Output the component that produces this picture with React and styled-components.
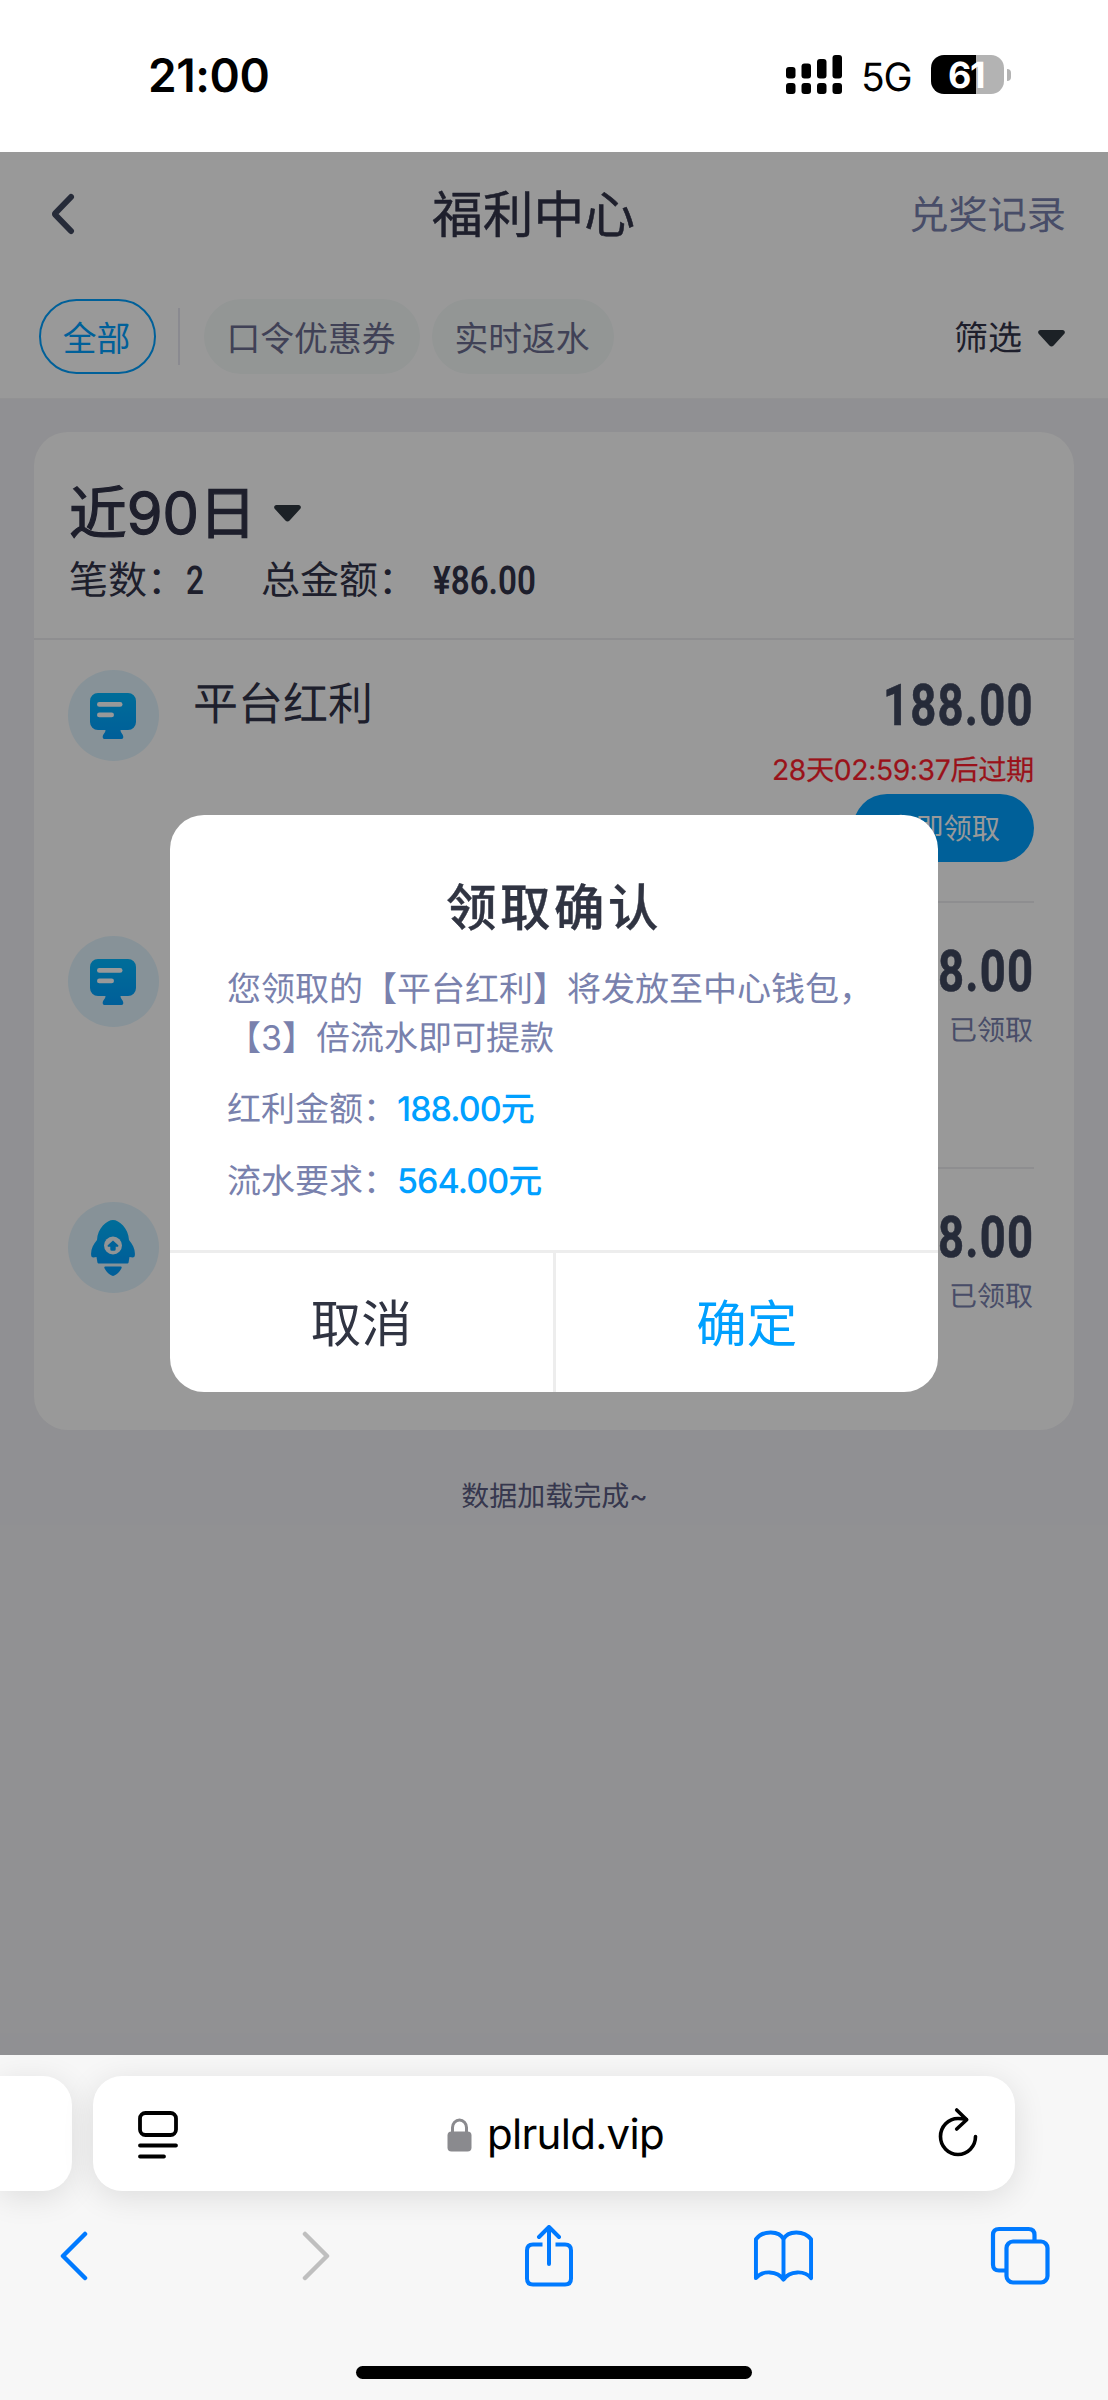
import React from "react";
import styled, { createGlobalStyle } from "styled-components";

const GlobalStyle = createGlobalStyle`
  * { box-sizing: border-box; }
  body {
    margin: 0;
    background: #fff;
    font-family: Inter, "Noto Sans CJK SC", sans-serif;
    text-rendering: geometricPrecision;
  }
`;

const Phone = styled.div`
  width: 1108px;
  height: 2400px;
  display: flex;
  flex-direction: column;
  overflow: hidden;
`;

/* ---------- status bar ---------- */

const StatusBar = styled.header`
  height: 152px;
  padding: 0 97px 3px 148px;
  display: flex;
  align-items: center;
  justify-content: space-between;
  background: #fff;
`;

const Clock = styled.time`
  padding-top: 2px;
  font-size: 46px;
  font-weight: 600;
  line-height: 60px;
  letter-spacing: -0.4px;
  color: #000;
`;

const StatusIcons = styled.div`
  display: flex;
  align-items: center;
`;

const Network = styled.span`
  margin: 6px 21px 0 18px;
  width: 49px;
  font-size: 39px;
  line-height: 46px;
  letter-spacing: -1.2px;
  white-space: nowrap;
`;

const Battery = styled.div`
  width: 73px;
  height: 39px;
  padding-right: 3px;
  border-radius: 13px;
  background: linear-gradient(to right, #000 0 45px, #b3b3b3 45px);
  color: #fff;
  font-size: 36px;
  font-weight: 700;
  line-height: 40px;
  text-align: center;
  letter-spacing: -1.5px;
`;

const BatteryCap = styled.div`
  width: 4px;
  height: 12px;
  margin-left: 3px;
  border-radius: 0 5px 5px 0;
  background: #b3b3b3;
`;

/* ---------- page ---------- */

const Viewport = styled.main`
  position: relative;
  height: 1903px;
  background: #f1f1f5;
`;

const TopPanel = styled.div`
  height: 247px;
  background: #fff;
  border-bottom: 1px solid #f4f4f6;
`;

const TitleBar = styled.div`
  height: 124px;
  padding: 0 42px 0 50px;
  display: grid;
  grid-template-columns: 1fr auto 1fr;
  align-items: center;
`;

const PageTitle = styled.h1`
  margin: 4px 49px 0 0;
  font-size: 50.7px;
  font-weight: 400;
  line-height: 60px;
  color: #32344a;
  -webkit-text-stroke: 0.5px #32344a;
`;

const HistoryLink = styled.a`
  justify-self: end;
  margin-top: 3px;
  font-size: 39.2px;
  line-height: 50px;
  color: #7981ad;
`;

const FilterBar = styled.div`
  height: 122px;
  padding: 23px 43px 24px 39px;
  display: flex;
  align-items: center;
`;

const Pill = styled.button`
  height: 75px;
  width: ${(p) => p.$width}px;
  margin-right: 12px;
  padding: 4px 2px 0 0;
  border: ${(p) => (p.$active ? "2px solid #00a0ff" : "0")};
  border-radius: 38px;
  background: ${(p) => (p.$active ? "transparent" : "#f5faf9")};
  color: ${(p) => (p.$active ? "#00a0ff" : "#6b6d90")};
  font: 400 33.8px/48px Inter, "Noto Sans CJK SC", sans-serif;
`;

const PillDivider = styled.span`
  width: 2px;
  height: 57px;
  margin: 0 24px 0 10px;
  background: #e6e6f0;
`;

const FilterToggle = styled.div`
  margin-left: auto;
  padding-top: 4px;
  display: flex;
  align-items: center;
  gap: 16px;
  font-size: 34px;
  line-height: 48px;
  color: #32344a;
`;

const Card = styled.section`
  height: 998px;
  margin: 33px 34px 0;
  border-radius: 34px;
  background: #fff;
`;

const Summary = styled.div`
  height: 208px;
  padding: 43px 34px 0 35px;
  border-bottom: 2px solid #ededf0;
`;

const Period = styled.div`
  display: flex;
  align-items: center;
  gap: 17px;
  font-size: 57.7px;
  line-height: 76px;
  color: #32344a;
  -webkit-text-stroke: 1.2px #32344a;
`;

const Totals = styled.div`
  margin-top: 5px;
  display: flex;
  align-items: center;
  font-size: 39px;
  line-height: 50px;
  color: #32344a;
`;

const TotalItem = styled.span`
  display: flex;
  width: ${(p) => p.$width}px;
`;

const Condensed = styled.span`
  display: inline-block;
  font-family: Roboto, "Noto Sans CJK SC", sans-serif;
  font-weight: ${(p) => p.$weight || 600};
  font-size: ${(p) => p.$size}px;
  line-height: 50px;
  letter-spacing: ${(p) => p.$spacing || 0}px;
  white-space: nowrap;
  transform: scaleX(${(p) => p.$scale});
  transform-origin: ${(p) => p.$origin || "left"} center;
`;

const Entry = styled.div`
  height: ${(p) => (p.$first ? 263 : 266)}px;
  padding: 0 40px 0 34px;
  display: flex;
  align-items: stretch;
`;

const EntryBody = styled.div`
  flex: 1;
  margin-left: 34px;
  padding-top: ${(p) => (p.$first ? 30 : 33)}px;
  display: flex;
  align-items: flex-start;
  border-bottom: ${(p) => (p.$last ? "0" : "2px solid #ededf0")};
`;

const Badge = styled.div`
  width: 91px;
  height: 91px;
  margin-top: ${(p) => (p.$first ? 30 : 33)}px;
  padding-right: 1px;
  border-radius: 50%;
  display: grid;
  place-items: center;
  background: #e1f4fd;
`;

const EntryName = styled.div`
  margin-top: 4px;
  font-size: 45px;
  line-height: 60px;
  color: #32344a;
`;

const EntrySide = styled.div`
  margin-left: auto;
  display: flex;
  flex-direction: column;
  align-items: flex-end;
`;

const Amount = styled.div`
  height: 75px;
  padding-top: 12px;
  color: #404860;
  -webkit-text-stroke: 0.6px #404860;
`;

const Expiry = styled.div`
  padding-top: 1px;
  font-size: 28.3px;
  line-height: 48px;
  letter-spacing: -0.4px;
  color: #ff1f2d;
  -webkit-text-stroke: 0.2px #ff1f2d;
`;

const Claimed = styled.div`
  margin-top: -2px;
  padding-right: 1px;
  font-size: 28px;
  line-height: 42px;
  color: #7981ad;
`;

const ClaimButton = styled.button`
  width: 181px;
  height: 68px;
  padding: 2px 0 0;
  border: 0;
  border-radius: 34px;
  background: #00a0ff;
  color: #fff;
  font: 400 28.3px/40px Inter, "Noto Sans CJK SC", sans-serif;
`;

const EndNote = styled.p`
  margin: 45px 0 0;
  padding-left: 1px;
  text-align: center;
  font-size: 28px;
  line-height: 42px;
  color: #5a5c82;
`;

/* ---------- dialog ---------- */

const Overlay = styled.div`
  position: absolute;
  inset: 0;
  display: flex;
  align-items: center;
  justify-content: center;
  background: rgba(0, 0, 0, 0.4);
`;

const Dialog = styled.div`
  width: 768px;
  height: 577px;
  border-radius: 34px;
  background: #fff;
  display: flex;
  flex-direction: column;
  overflow: hidden;
`;

const DialogBody = styled.div`
  flex: 1;
  padding: 60px 40px 0 57px;
  color: #7981ad;
  font-size: 34px;
  line-height: 49px;
`;

const DialogTitle = styled.h2`
  margin: 0 -17px 22px 0;
  padding-right: 34px;
  text-align: center;
  font-size: 50.5px;
  font-weight: 500;
  line-height: 68px;
  letter-spacing: 3.5px;
  color: #303442;
  -webkit-text-stroke: 0.4px #303442;
`;

const DialogText = styled.p`
  margin: 0 0 22px;
`;

const Field = styled.div`
  margin-bottom: 23px;
  display: flex;
`;

const FieldValue = styled.span`
  font-weight: 500;
  letter-spacing: -0.95px;
  color: #00a0ff;
`;

const DialogActions = styled.div`
  height: 142px;
  display: flex;
  border-top: 3px solid #ededed;
`;

const DialogButton = styled.button`
  flex: 1;
  padding: 2px 0 0;
  border: 0;
  border-left: ${(p) => (p.$primary ? "3px solid #ededed" : "0")};
  background: transparent;
  color: ${(p) => (p.$primary ? "#00a0ff" : "#303442")};
  font: 400 50.5px/64px Inter, "Noto Sans CJK SC", sans-serif;
`;

/* ---------- browser chrome ---------- */

const BrowserBar = styled.footer`
  height: 345px;
  background: #f7f7f7;
  display: flex;
  flex-direction: column;
`;

const TabStrip = styled.div`
  display: flex;
  gap: 21px;
  padding-top: 21px;
`;

const NeighbourTab = styled.div`
  width: 72px;
  height: 115px;
  border-radius: 0 29px 29px 0;
  background: #fff;
  box-shadow: 0 6px 32px rgba(0, 0, 0, 0.11);
`;

const AddressBar = styled.div`
  width: 922px;
  height: 115px;
  padding: 0 37px 0 45px;
  border-radius: 29px;
  background: #fff;
  box-shadow: 0 6px 32px rgba(0, 0, 0, 0.11);
  display: flex;
  align-items: center;
  justify-content: space-between;
`;

const Address = styled.div`
  margin-right: 5px;
  padding-top: 2px;
  display: flex;
  align-items: center;
  gap: 15px;
  font-size: 42px;
  line-height: 60px;
  letter-spacing: -0.7px;
  color: #000;
`;

const Toolbar = styled.nav`
  height: 110px;
  margin-top: 10px;
  padding: 0 57px 0 42px;
  display: flex;
  align-items: center;
  justify-content: space-between;
`;

const ToolSlot = styled.span`
  width: 62px;
  padding-left: ${(p) => p.$nudge || 0}px;
  display: flex;
  justify-content: center;
`;

const HomeIndicator = styled.div`
  width: 396px;
  height: 13px;
  margin: 55px auto 0;
  border-radius: 7px;
  background: #000;
`;

/* ---------- drawings ---------- */

const SignalIcon = () => (
  <svg width="57" height="40" viewBox="0 0 57 40">
    {[12, 8.5, 4, 0].map((y, i) => (
      <g key={y}>
        <rect x={i * 15.5} y={y} width="9.5" height={23.5 - y} rx="3" />
        <rect x={i * 15.5} y="28" width="9.5" height="11" rx="3" />
      </g>
    ))}
  </svg>
);

const BackIcon = () => (
  <svg width="26" height="42" viewBox="0 0 26 42" fill="none" stroke="#404860" strokeWidth="6" strokeLinecap="round" strokeLinejoin="round">
    <path d="M21 4 5.500 20Q4.600 21 5.500 22L21 38" />
  </svg>
);

const Caret = () => (
  <svg width="27" height="17" viewBox="0 0 27 17" fill="#2f3840">
    <path d="M2.500 0h22c2.200 0 3.200 2.400 1.600 4L15.600 15.600c-1.200 1.300-3 1.300-4.200 0L.900 4C-.700 2.400.300 0 2.500 0z" />
  </svg>
);

const MonitorIcon = () => (
  <svg width="46" height="46" viewBox="0 0 46 46">
    <defs>
      <linearGradient id="monitor" x1="0" y1="0" x2="0" y2="1">
        <stop offset="0" stopColor="#00b6ff" />
        <stop offset="1" stopColor="#009eff" />
      </linearGradient>
    </defs>
    <path fill="url(#monitor)" d="M8 0h30a8 8 0 0 1 8 8v21a8 8 0 0 1-8 8h-7.500c0 3 2.800 4 2.800 7 0 1.200-.6 2-1.800 2h-17c-1.200 0-1.800-.8-1.800-2 0-3 2.800-4 2.800-7H8a8 8 0 0 1-8-8V8a8 8 0 0 1 8-8z" />
    <rect x="7" y="9" width="25.500" height="4.800" rx="2.400" fill="#fff" />
    <rect x="7" y="19.500" width="17" height="4.800" rx="2.400" fill="#fff" />
  </svg>
);

const RocketIcon = () => (
  <svg width="44" height="56" viewBox="0 0 44 56">
    <defs>
      <linearGradient id="rocket" x1="0" y1="0" x2="0" y2="1">
        <stop offset="0" stopColor="#00b6ff" />
        <stop offset="1" stopColor="#009eff" />
      </linearGradient>
    </defs>
    <path fill="url(#rocket)" d="M22 0c6 0 15.500 8 16 20 4 5 6.500 9.500 5.800 15.500-.2 2-1.500 2.500-5.300 1.500l-.8 4.700c-.2 1.400-.8 1.900-2 1.900H8.300c-1.200 0-1.800-.5-2-1.900L5.500 37C1.700 38 .4 37.500.2 35.500-.5 29.500 2 25 6 20 6.500 8 16 0 22 0z" />
    <path fill="#009eff" d="M14.500 46.500h15c1 0 1.500.7 1 1.700-1.800 3.600-4 5.600-7.200 7.400-.9.500-1.700.5-2.600 0-3.200-1.800-5.400-3.800-7.200-7.400-.5-1 0-1.700 1-1.700z" />
    <circle cx="22" cy="25.500" r="9" fill="#f2f7fa" />
    <path fill="#00a4ff" d="m22 20.500 5 4.500c.8.800.4 1.800-.8 1.800h-1.500v2.400q0 1.600-1.600 1.600h-2.200q-1.600 0-1.600-1.600v-2.400h-1.500c-1.200 0-1.600-1-.8-1.800z" />
  </svg>
);

const ReaderIcon = () => (
  <svg width="40" height="50" viewBox="0 0 40 50" fill="none" stroke="#000" strokeWidth="3.8" strokeLinecap="round">
    <rect x="2" y="4" width="36" height="22" rx="5.500" />
    <path d="M2 36.500h36M2 47.500h24" />
  </svg>
);

const LockIcon = () => (
  <svg width="25" height="34" viewBox="0 0 25 34">
    <rect x="0.500" y="13.500" width="24" height="20" rx="4" fill="#8a8a8e" />
    <path d="M5.500 15V9.500a7 7.500 0 0 1 14 0V15" fill="none" stroke="#8a8a8e" strokeWidth="3" />
  </svg>
);

const ReloadIcon = () => (
  <svg width="40" height="54" viewBox="0 0 40 54" fill="none" stroke="#000" strokeWidth="3.600" strokeLinecap="round" strokeLinejoin="round">
    <path d="M37.500 29.500a17.500 18 0 1 1-17.500-18q4 0 8.300 1" />
    <path d="M18.700 3 28.700 12.800 18.700 22" />
  </svg>
);

const BackArrow = () => (
  <svg width="29" height="50" viewBox="0 0 29 50" fill="none" stroke="#007aff" strokeWidth="4.500" strokeLinecap="round" strokeLinejoin="round">
    <path d="M26 3 4 25l22 22" />
  </svg>
);

const ForwardArrow = () => (
  <svg width="29" height="50" viewBox="0 0 29 50" fill="none" stroke="#bfbfbf" strokeWidth="4.500" strokeLinecap="round" strokeLinejoin="round">
    <path d="M3 3l22 22L3 47" />
  </svg>
);

const ShareIcon = () => (
  <svg width="50" height="63" viewBox="0 0 50 63" fill="none" stroke="#007aff" strokeWidth="4" strokeLinecap="round" strokeLinejoin="round">
    <path strokeLinecap="butt" d="M18.500 19.500H9q-6 0-6 6v28q0 6 6 6h32q6 0 6-6v-28q0-6-6-6h-9.500" />
    <path d="M25 39V2.500M15 12 25 2l10 10" />
  </svg>
);

const BookIcon = () => (
  <svg width="62" height="54" viewBox="0 0 62 54" fill="none" stroke="#007aff" strokeWidth="4" strokeLinecap="round" strokeLinejoin="round">
    <path d="M31 10C27 1 10 .500 3 10v39.500c6-8 22-8 28 1.500 6-9.500 22-9.500 28-1.500V10C52 .500 35 1 31 10zM31 10V51" />
  </svg>
);

const TabsIcon = () => (
  <svg width="60" height="60" viewBox="0 0 60 60" fill="none" stroke="#007aff" strokeWidth="4.200">
    <rect x="16.500" y="15.500" width="41" height="41" rx="6.500" />
    <path d="M16 44.500H9q-6 0-6-6V9q0-6 6-6h29.500q6 0 6 6v6" />
  </svg>
);

/* ---------- data ---------- */

const ENTRIES = [
  { id: 1, name: "平台红利", amount: "188.00", Icon: MonitorIcon, expiry: "28天02:59:37后过期" },
  { id: 2, amount: "38.00", Icon: MonitorIcon },
  { id: 3, amount: "48.00", Icon: RocketIcon },
];

export default function App() {
  return (
    <Phone lang="zh-CN">
      <GlobalStyle />
      <StatusBar>
        <Clock>21:00</Clock>
        <StatusIcons>
          <SignalIcon />
          <Network>5G</Network>
          <Battery>61</Battery>
          <BatteryCap />
        </StatusIcons>
      </StatusBar>

      <Viewport>
        <TopPanel>
          <TitleBar>
            <BackIcon />
            <PageTitle>福利中心</PageTitle>
            <HistoryLink>兑奖记录</HistoryLink>
          </TitleBar>
          <FilterBar>
            <Pill $active $width={117}>全部</Pill>
            <PillDivider />
            <Pill $width={216}>口令优惠券</Pill>
            <Pill $width={182}>实时返水</Pill>
            <FilterToggle>
              <span>筛选</span>
              <Caret />
            </FilterToggle>
          </FilterBar>
        </TopPanel>

        <Card>
          <Summary>
            <Period>
              近90日
              <Caret />
            </Period>
            <Totals>
              <TotalItem $width={192}>
                <span>笔数：</span>
                <Condensed $size={39.5} $scale={0.8} $weight={500}>2</Condensed>
              </TotalItem>
              <TotalItem $width={172}>总金额：</TotalItem>
              <Condensed $size={39.5} $scale={0.84} $weight={600}>¥86.00</Condensed>
            </Totals>
          </Summary>

          {ENTRIES.map(({ id, name, amount, Icon, expiry }, i) => (
            <Entry key={id} $first={i === 0}>
              <Badge $first={i === 0}>
                <Icon />
              </Badge>
              <EntryBody $first={i === 0} $last={i === ENTRIES.length - 1}>
                {name && <EntryName>{name}</EntryName>}
                <EntrySide>
                  <Amount>
                    <Condensed $size={57.5} $scale={0.79} $weight={700} $spacing={1.5} $origin="right">
                      {amount}
                    </Condensed>
                  </Amount>
                  {expiry ? (
                    <>
                      <Expiry>{expiry}</Expiry>
                      <ClaimButton>立即领取</ClaimButton>
                    </>
                  ) : (
                    <Claimed>已领取</Claimed>
                  )}
                </EntrySide>
              </EntryBody>
            </Entry>
          ))}
        </Card>

        <EndNote>数据加载完成~</EndNote>

        <Overlay>
          <Dialog role="dialog">
            <DialogBody>
              <DialogTitle>领取确认</DialogTitle>
              <DialogText>
                您领取的【平台红利】将发放至中心钱包，
                <br />
                【3】倍流水即可提款
              </DialogText>
              <Field>
                红利金额：<FieldValue>188.00元</FieldValue>
              </Field>
              <Field>
                流水要求：<FieldValue>564.00元</FieldValue>
              </Field>
            </DialogBody>
            <DialogActions>
              <DialogButton>取消</DialogButton>
              <DialogButton $primary>确定</DialogButton>
            </DialogActions>
          </Dialog>
        </Overlay>
      </Viewport>

      <BrowserBar>
        <TabStrip>
          <NeighbourTab />
          <AddressBar>
            <ReaderIcon />
            <Address>
              <LockIcon />
              <span>plruld.vip</span>
            </Address>
            <ReloadIcon />
          </AddressBar>
        </TabStrip>
        <Toolbar>
          <ToolSlot>
            <BackArrow />
          </ToolSlot>
          <ToolSlot $nudge={13}>
            <ForwardArrow />
          </ToolSlot>
          <ToolSlot $nudge={4}>
            <ShareIcon />
          </ToolSlot>
          <ToolSlot $nudge={1}>
            <BookIcon />
          </ToolSlot>
          <ToolSlot>
            <TabsIcon />
          </ToolSlot>
        </Toolbar>
        <HomeIndicator />
      </BrowserBar>
    </Phone>
  );
}
